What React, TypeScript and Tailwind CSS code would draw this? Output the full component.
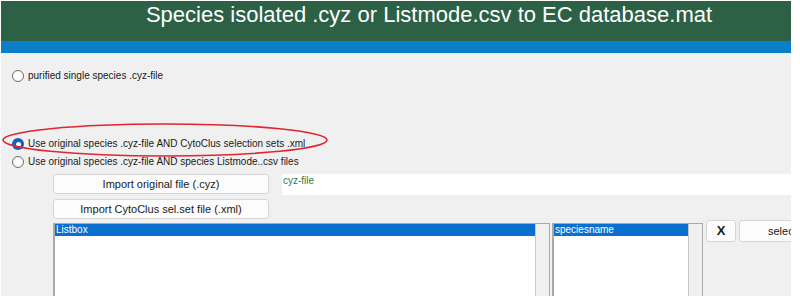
import React from "react";

const F = { fontFamily: '"Liberation Sans", Arial, sans-serif' };

function Radio({ checked, label }: { checked?: boolean; label: string }) {
  return (
    <div className="flex items-center h-[12px]">
      {checked ? (
        <span className="w-[12px] h-[12px] rounded-full bg-[#1560bd] flex items-center justify-center shrink-0">
          <span className="w-[5px] h-[5px] rounded-full bg-white" />
        </span>
      ) : (
        <span className="w-[12px] h-[12px] rounded-full border border-[#6b6b6b] bg-white shrink-0" />
      )}
      <span className="ml-[4px] text-[10px] text-[#1a1a1a] leading-none whitespace-nowrap">{label}</span>
    </div>
  );
}

function Btn({ children, className }: { children: React.ReactNode; className: string }) {
  return (
    <div
      className={
        "flex items-center justify-center bg-[#fcfcfc] border border-[#d6d6d6] rounded-[3px] text-[#1a1a1a] shrink-0 " +
        className
      }
    >
      {children}
    </div>
  );
}

function ListBox({ title, className, listW }: { title: string; className: string; listW: string }) {
  return (
    <div className={"flex h-[80px] border-l-2 border-t border-r border-[#a9a9a9] bg-white shrink-0 " + className}>
      <div className={"bg-white " + listW}>
        <div className="h-[12px] bg-[#0a6fd0] text-white text-[10px] leading-[12px] pl-[1px]">{title}</div>
      </div>
      <div className="flex-1 bg-[#f0f0f0] border-l border-[#c8c8c8]" />
    </div>
  );
}

export default function App() {
  return (
    <div className="w-[800px] h-[303px] bg-white pl-[1px] pt-[1px]" style={F}>
      <div className="relative w-[790px] h-[295px] bg-[#f0f0f0] overflow-hidden">
        <div className="h-[40px] bg-[#2c6146] flex items-start justify-center pl-[66px] pt-[3px]">
          <span className="text-white text-[22px] leading-none whitespace-nowrap">
            Species isolated .cyz or Listmode.csv to EC database.mat
          </span>
        </div>
        <div className="h-[12px] bg-[#0a7fc8]" />
        <div className="pl-[11px] pt-[17px]">
          <Radio label="purified single species .cyz-file" />
          <div className="mt-[56px]">
            <Radio checked label="Use original species .cyz-file AND CytoClus selection sets .xml" />
          </div>
          <div className="mt-[6px]">
            <Radio label="Use original species .cyz-file AND species Listmode..csv files" />
          </div>
        </div>
        <div className="pl-[52px] mt-[6px]">
          <div className="flex items-start">
            <Btn className="w-[216px] h-[20px] text-[11px]">Import original file (.cyz)</Btn>
            <div className="ml-[13px] w-[520px] h-[21px] bg-white shrink-0 text-[10px] text-[#2f7a4a] pl-[1px] pt-[2px] leading-none">
              cyz-file
            </div>
          </div>
          <Btn className="mt-[4px] w-[216px] h-[20px] text-[11px]">Import CytoClus sel.set file (.xml)</Btn>
          <div className="flex items-start mt-[1px]">
            <ListBox title="Listbox" className="mt-[3px] w-[497px]" listW="w-[480px]" />
            <ListBox title="speciesname" className="mt-[3px] ml-[2px] w-[151px]" listW="w-[134px]" />
            <Btn className="ml-[3px] w-[30px] h-[22px] text-[13px] font-bold">X</Btn>
            <Btn className="ml-[3px] w-[80px] h-[22px] text-[11px] justify-start pl-[28px]">select</Btn>
          </div>
        </div>
        <svg className="absolute left-0 top-0 pointer-events-none" width="790" height="295">
          <ellipse cx="164" cy="139" rx="162" ry="16" fill="none" stroke="#e02630" strokeWidth="1.6" />
        </svg>
      </div>
    </div>
  );
}
